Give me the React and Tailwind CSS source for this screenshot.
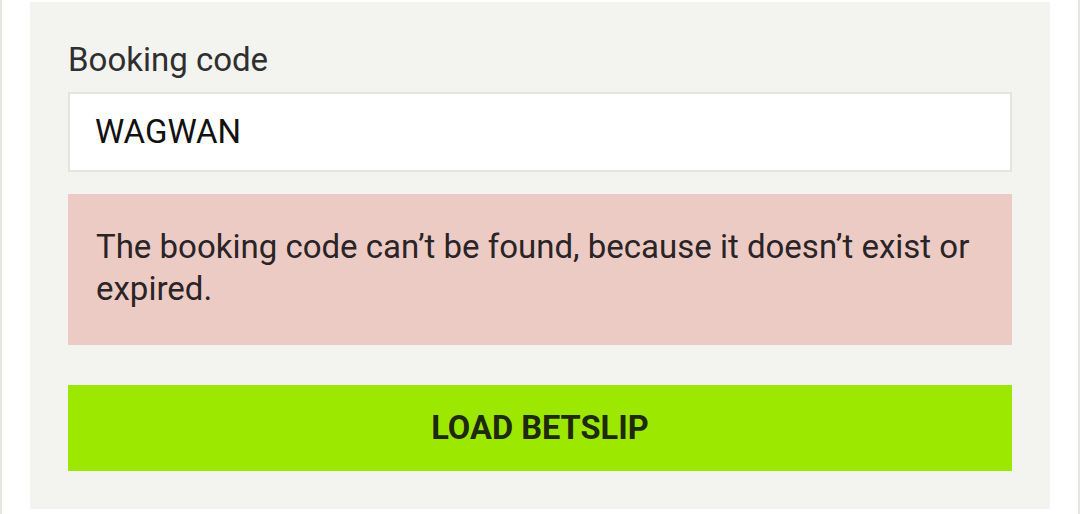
export default function App() {
  return (
    <div
      className="flex w-[1080px] h-[514px] bg-white overflow-hidden"
      style={{ fontFamily: "Roboto, 'Noto Sans', sans-serif" }}
    >
      <div className="w-[2px] h-full bg-[#e6e6e3]" />
      <div className="flex-1 flex justify-center">
        <div className="mt-[2px] w-[1020px] h-[507px] bg-[#f3f3ef] px-[38px] pt-[38px] flex flex-col">
          <label className="text-[33px] leading-[40px] text-[#2f2f2f]">Booking code</label>
          <div className="mt-[12px] h-[80px] bg-white border-2 border-[#e4e4e0] flex items-center pl-[25px]">
            <span className="text-[33px] leading-[40px] text-[#111111]">WAGWAN</span>
          </div>
          <div className="mt-[22px] bg-[#edcbc5] pt-[32px] pb-[35px] pl-[28px] pr-[28px]">
            <p className="text-[33px] leading-[42px] text-[#2b2426]">
              The booking code can’t be found, because it doesn’t exist or expired.
            </p>
          </div>
          <button className="mt-[40px] h-[86px] bg-[#9de800] flex items-center justify-center">
            <span className="text-[32.6px] leading-[40px] font-bold text-[#1d2a0c]">LOAD BETSLIP</span>
          </button>
        </div>
      </div>
      <div className="w-[2px] h-full bg-[#e6e6e3]" />
    </div>
  );
}
